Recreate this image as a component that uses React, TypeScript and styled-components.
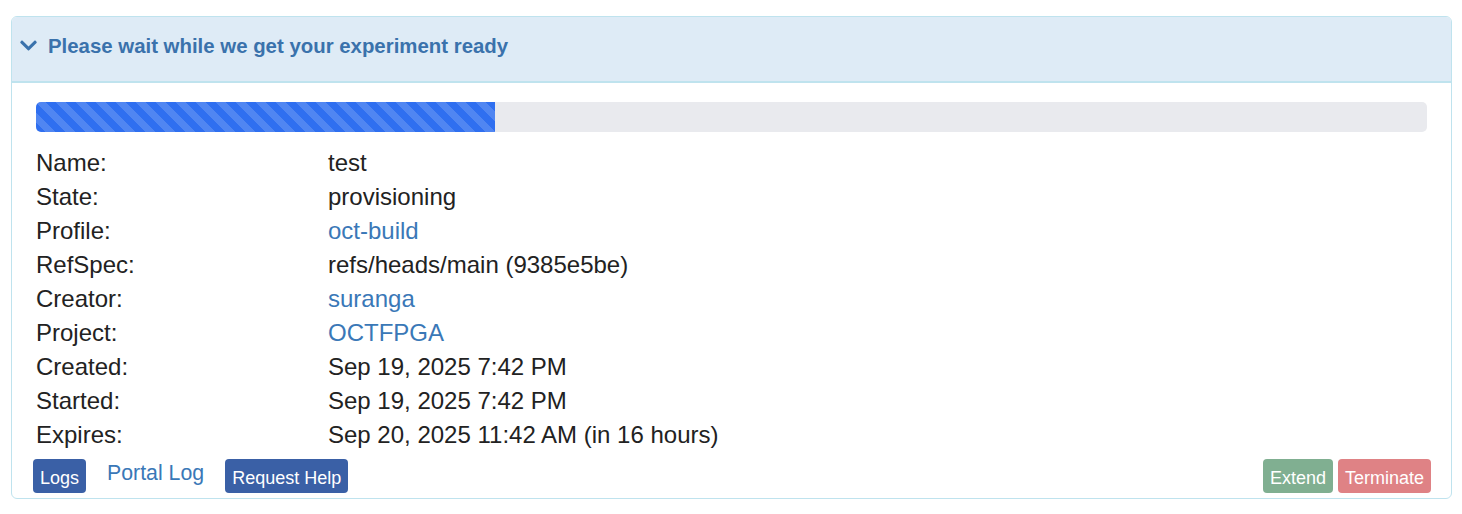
import styled, { createGlobalStyle } from "styled-components";

const GlobalStyle = createGlobalStyle`
  html, body {
    margin: 0;
    padding: 0;
    background: #ffffff;
    font-family: "Liberation Sans", Arial, Helvetica, sans-serif;
    color: #222222;
  }
`;

type Detail = { label: string; value: string; link?: boolean };

const details: Detail[] = [
  { label: "Name:", value: "test" },
  { label: "State:", value: "provisioning" },
  { label: "Profile:", value: "oct-build", link: true },
  { label: "RefSpec:", value: "refs/heads/main (9385e5be)" },
  { label: "Creator:", value: "suranga", link: true },
  { label: "Project:", value: "OCTFPGA", link: true },
  { label: "Created:", value: "Sep 19, 2025 7:42 PM" },
  { label: "Started:", value: "Sep 19, 2025 7:42 PM" },
  { label: "Expires:", value: "Sep 20, 2025 11:42 AM (in 16 hours)" },
];

const progress = 33;

export default function App() {
  return (
    <Page>
      <GlobalStyle />
      <Panel>
        <Heading>
          <Chevron viewBox="0 115 448 280" aria-hidden="true">
            <path d="M207.029 381.476L12.686 187.132c-9.373-9.373-9.373-24.569 0-33.941l22.667-22.667c9.357-9.357 24.522-9.375 33.901-.04L224 284.505l154.745-154.021c9.379-9.335 24.544-9.317 33.901.04l22.667 22.667c9.373 9.373 9.373 24.569 0 33.941L240.971 381.476c-9.373 9.372-24.569 9.372-33.942 0z" />
          </Chevron>
          Please wait while we get your experiment ready
        </Heading>
        <Body>
          <Progress>
            <ProgressBar style={{ width: `${progress}%` }} />
          </Progress>
          <InfoTable>
            {details.map((d) => (
              <Row key={d.label}>
                <Label>{d.label}</Label>
                {d.link ? <Link href="#">{d.value}</Link> : <Value>{d.value}</Value>}
              </Row>
            ))}
          </InfoTable>
          <Footer>
            <Group>
              <Button $tone="primary">Logs</Button>
              <PlainLink href="#">Portal Log</PlainLink>
              <Button $tone="primary">Request Help</Button>
            </Group>
            <Group $tight>
              <Button $tone="success">Extend</Button>
              <Button $tone="danger">Terminate</Button>
            </Group>
          </Footer>
        </Body>
      </Panel>
    </Page>
  );
}

const Page = styled.div`
  padding: 16px 10px 0 11px;
`;

const Panel = styled.section`
  border: 1px solid #bfe3ee;
  border-radius: 6px;
  background: #ffffff;
  overflow: hidden;
`;

const Heading = styled.h3`
  margin: 0;
  height: 66px;
  box-sizing: border-box;
  padding: 16px 0 0 8px;
  background: #deebf6;
  border-bottom: 2px solid #bfe3ee;
  color: #3a72ac;
  font-size: 20.4px;
  font-weight: bold;
  line-height: 26px;
  display: flex;
  align-items: flex-start;
  gap: 11px;
`;

const Chevron = styled.svg`
  width: 17px;
  height: 11px;
  margin-top: 7px;
  fill: #3a72ac;
  flex: none;
`;

const Body = styled.div`
  padding: 19px 24px 5px 24px;
`;

const Progress = styled.div`
  height: 30px;
  border-radius: 5px;
  background: #e9eaee;
  overflow: hidden;
`;

const ProgressBar = styled.div`
  height: 100%;
  background-color: #2f6ff0;
  background-image: linear-gradient(
    45deg,
    rgba(255, 255, 255, 0.16) 25%,
    transparent 25%,
    transparent 50%,
    rgba(255, 255, 255, 0.16) 50%,
    rgba(255, 255, 255, 0.16) 75%,
    transparent 75%,
    transparent
  );
  background-size: 20px 20px;
`;

const InfoTable = styled.div`
  margin-top: 14px;
  display: flex;
  flex-direction: column;
`;

const Row = styled.div`
  display: grid;
  grid-template-columns: 292px 1fr;
  font-size: 24px;
  line-height: 34px;
`;

const Label = styled.span`
  color: #222222;
`;

const Value = styled.span`
  color: #222222;
`;

const Link = styled.a`
  color: #3a78b7;
  text-decoration: none;
`;

const Footer = styled.div`
  margin: 7px -4px 0 -3px;
  display: flex;
  justify-content: space-between;
  align-items: center;
`;

const Group = styled.div<{ $tight?: boolean }>`
  display: flex;
  align-items: center;
  gap: ${(p) => (p.$tight ? "5px" : "21px")};
`;

const tones = {
  primary: "#3a60a6",
  success: "#80af91",
  danger: "#df8285",
};

const Button = styled.button<{ $tone: keyof typeof tones }>`
  height: 34px;
  padding: 5px 7px 0 7px;
  border: none;
  border-radius: 4px;
  background: ${(p) => tones[p.$tone]};
  color: #ffffff;
  font-family: "Liberation Sans", Arial, sans-serif;
  font-size: 18px;
  line-height: 29px;
  cursor: pointer;
`;

const PlainLink = styled.a`
  color: #3a78b7;
  font-size: 21.3px;
  text-decoration: none;
  margin-top: -6px;
`;
